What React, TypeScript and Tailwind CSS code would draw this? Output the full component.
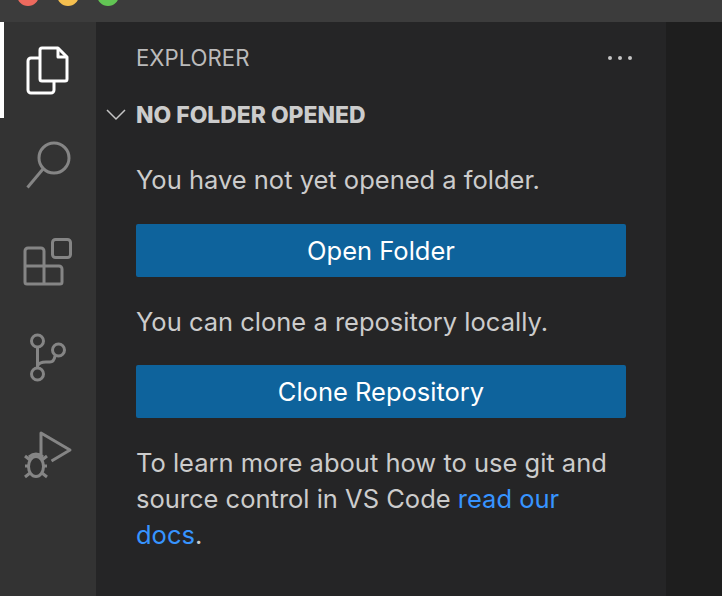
const font = "font-['Inter','Noto_Sans',sans-serif]";

function ActivityIcon({ active, children }: { active?: boolean; children: React.ReactNode }) {
  return (
    <div className={`flex h-[96px] w-[96px] border-l-[4px] ${active ? "border-white" : "border-transparent"}`}>
      <svg
        viewBox="4 0 92 96"
        className={`h-[96px] w-[92px] ${active ? "text-white" : "text-[#858585]"}`}
        fill="none"
        stroke="currentColor"
        strokeWidth="3"
        strokeLinejoin="round"
      >
        {children}
      </svg>
    </div>
  );
}

function SideButton({ label }: { label: string }) {
  return (
    <button className="flex h-[53px] w-full items-center justify-center rounded-[2px] bg-[#0e639c] text-[25.5px] text-white">
      {label}
    </button>
  );
}

export default function App() {
  return (
    <div className={`flex h-[596px] w-[722px] flex-col overflow-hidden bg-[#1e1e1e] ${font}`}>
      <div className="flex h-[22px] shrink-0 gap-[18px] bg-[#3c3c3c] pl-[17px]">
        <div className="-mt-[16px] h-[22px] w-[22px] rounded-full bg-[#ed6a5e]" />
        <div className="-mt-[16px] h-[22px] w-[22px] rounded-full bg-[#f5bf4f]" />
        <div className="-mt-[16px] h-[22px] w-[22px] rounded-full bg-[#62c554]" />
      </div>
      <div className="flex flex-1">
        <div className="flex w-[96px] shrink-0 flex-col bg-[#333333]">
          <ActivityIcon active>
            <path d="M39 36H31a3 3 0 0 0-3 3V68a3 3 0 0 0 3 3H51a3 3 0 0 0 3-3V59" />
            <path d="M58 26H42a2 2 0 0 0-2 2V57a2 2 0 0 0 2 2H65a2 2 0 0 0 2-2V35Z" />
            <path d="M58 26V35H67" />
          </ActivityIcon>
          <ActivityIcon>
            <circle cx="54" cy="40" r="15" />
            <path d="M43 51 27.500 69.500" />
          </ActivityIcon>
          <ActivityIcon>
            <rect x="52.500" y="25.500" width="18" height="18" rx="3" />
            <path d="M44 52V37a3 3 0 0 0-3-3H28a3 3 0 0 0-3 3V68a2 2 0 0 0 2 2H60a2 2 0 0 0 2-2V55a3 3 0 0 0-3-3H25M44 52V70" />
          </ActivityIcon>
          <ActivityIcon>
            <circle cx="37.500" cy="31" r="6" />
            <circle cx="58.500" cy="40" r="6" />
            <circle cx="37.500" cy="64" r="6" />
            <path d="M37.500 37V58M37.500 56Q39 52 46 52H50Q54 52 55 46" />
          </ActivityIcon>
          <ActivityIcon>
            <path d="M41 52V27L70 44 51.500 55" />
            <ellipse cx="36" cy="60.500" rx="7.500" ry="10" />
            <path d="M29 51Q36 45 43 51M29 60H25M43 60H47M25 50 30 54M47 50 42 54M25 71 30 67M47 71 42 67" />
          </ActivityIcon>
        </div>
        <div className="flex w-[570px] shrink-0 flex-col bg-[#252526] text-[#cccccc]">
          <div className="flex h-[72px] items-center justify-between pl-[40px] pr-[34px]">
            <span className="text-[22.2px] text-[#bbbbbb]">EXPLORER</span>
            <div className="flex gap-[6px]">
              <span className="h-[4px] w-[4px] rounded-full bg-[#c5c5c5]" />
              <span className="h-[4px] w-[4px] rounded-full bg-[#c5c5c5]" />
              <span className="h-[4px] w-[4px] rounded-full bg-[#c5c5c5]" />
            </div>
          </div>
          <div className="flex h-[42px] items-center pl-[10px]">
            <svg viewBox="0 0 20 12" className="mr-[10px] h-[12px] w-[20px]" fill="none" stroke="#c5c5c5" strokeWidth="1.500">
              <path d="M1 1 10 10 19 1" />
            </svg>
            <span className="text-[22.9px] font-extrabold">NO FOLDER OPENED</span>
          </div>
          <div className="flex flex-col pl-[40px] pr-[40px] text-[25.5px] leading-[36px]">
            <p className="mt-[26px]">You have not yet opened a folder.</p>
            <div className="mt-[26px]"><SideButton label="Open Folder" /></div>
            <p className="mt-[27px]">You can clone a repository locally.</p>
            <div className="mt-[25px]"><SideButton label="Clone Repository" /></div>
            <p className="mt-[27px]">
              To learn more about how to use git and source control in VS Code{" "}
              <a className="text-[#3794ff]">read our docs</a>.
            </p>
          </div>
        </div>
        <div className="flex-1 bg-[#1e1e1e]" />
      </div>
    </div>
  );
}
